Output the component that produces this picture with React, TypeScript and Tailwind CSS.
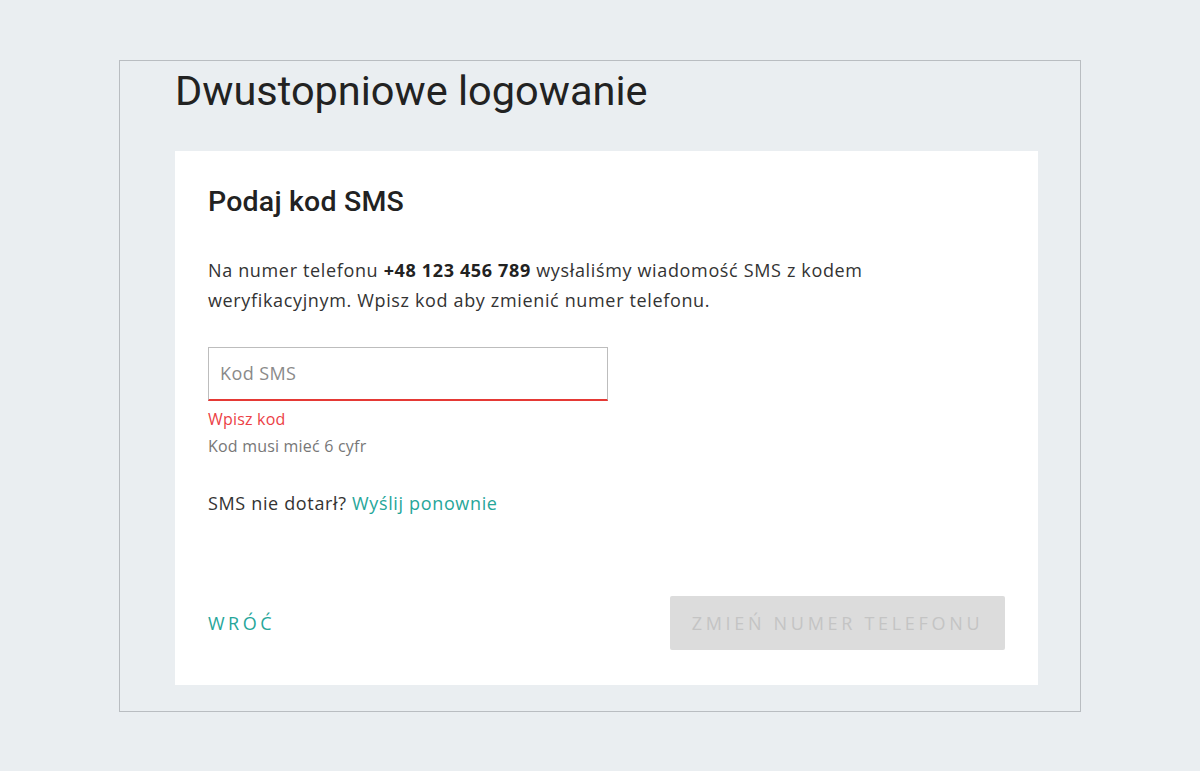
import React from 'react';

const body = { fontFamily: '"Open Sans", "Liberation Sans", sans-serif' };
const head = { fontFamily: 'Roboto, "Liberation Sans", sans-serif' };

export default function App() {
  return (
    <div className="min-h-screen w-full bg-[#eaeef1] pt-[60px]" style={body}>
      <div className="mx-auto w-[962px] h-[652px] border border-[#b9bdc1] pl-[55px]">
        {/* Title */}
        <h1 className="h-[90px] pt-[4px] text-[41.5px] leading-[52px] text-[#222] font-normal" style={head}>
          Dwustopniowe logowanie
        </h1>

        {/* Card */}
        <div className="w-[863px] bg-white px-[33px] pt-[34px] pb-[35px]">
          <h2 className="text-[28.5px] leading-[34px] font-medium tracking-[0.2px] text-[#222]" style={head}>
            Podaj kod SMS
          </h2>

          <p className="mt-[36px] max-w-[700px] text-[18px] leading-[30px] tracking-[0.65px] text-[#333]">
            Na numer telefonu <strong className="font-bold text-[#222]">+48 123 456 789</strong> wysłaliśmy wiadomość SMS z kodem weryfikacyjnym. Wpisz kod aby zmienić numer telefonu.
          </p>

          {/* Input */}
          <div className="mt-[32px] w-[400px]">
            <div className="h-[54px] border border-[#bdbdbd] border-b-2 border-b-[#e53935] flex items-center px-[11px]">
              <input
                className="w-full outline-none text-[18px] tracking-[0.4px] text-[#333] placeholder:text-[#8a8a8a] bg-transparent"
                placeholder="Kod SMS"
              />
            </div>
            <p className="mt-[6px] text-[16px] leading-[24px] tracking-[0.2px] text-[#ec3f46]">Wpisz kod</p>
            <p className="mt-[4px] text-[16px] leading-[22px] tracking-[0.2px] text-[#777]">Kod musi mieć 6 cyfr</p>
          </div>

          <p className="mt-[33px] text-[18px] leading-[26px] tracking-[0.65px] text-[#333]">
            SMS nie dotarł? <a className="text-[#26a69a] cursor-pointer">Wyślij ponownie</a>
          </p>

          {/* Actions */}
          <div className="mt-[80px] flex items-center justify-between">
            <button className="text-[18px] tracking-[3.5px] text-[#26a69a] uppercase">Wróć</button>
            <button className="w-[335px] h-[54px] rounded-[2px] bg-[#dcdcdc] text-[18px] tracking-[3.7px] text-[#c4c4c4] uppercase">
              Zmień numer telefonu
            </button>
          </div>
        </div>
      </div>
    </div>
  );
}
